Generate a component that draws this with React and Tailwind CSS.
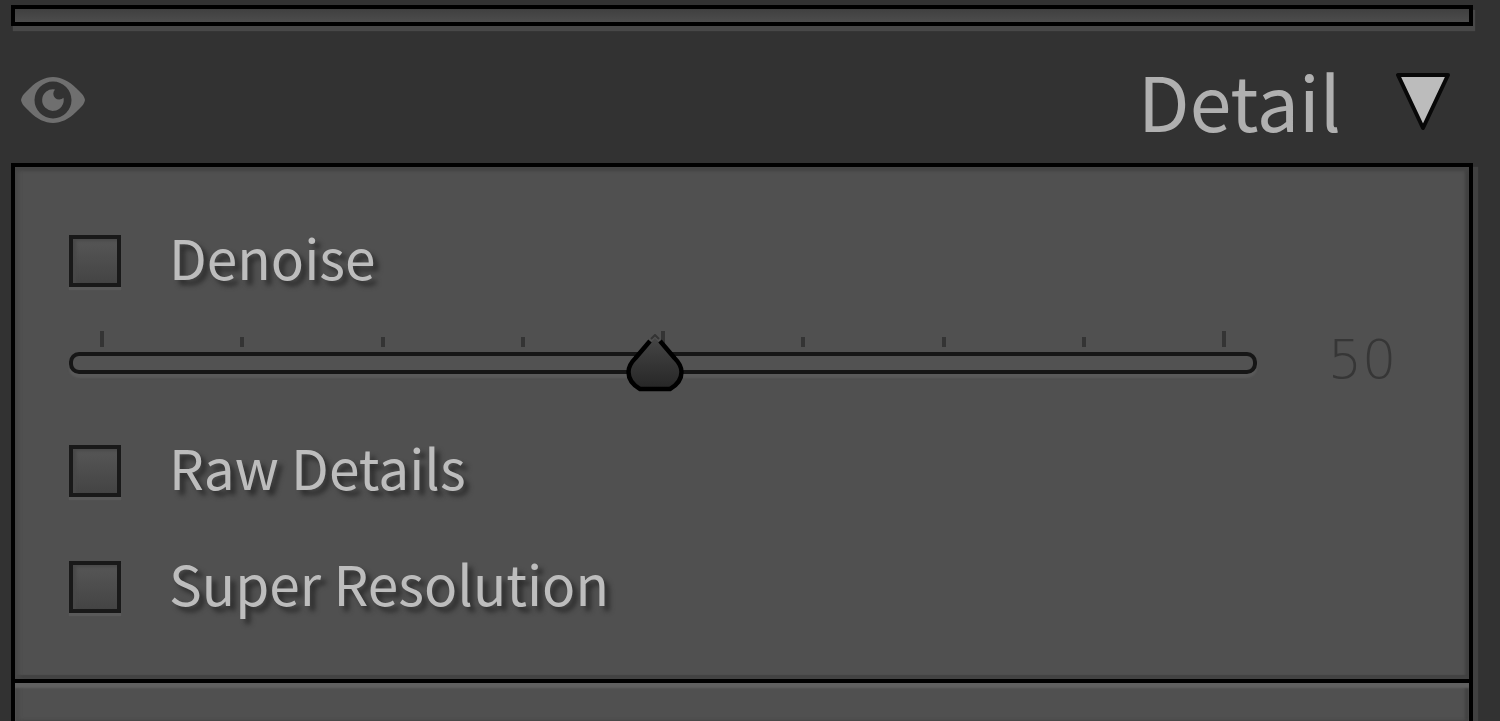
import { useState } from "react";

const FONT = "font-['Noto_Sans_CJK_SC','Noto_Sans',sans-serif]";

function EyeIcon() {
  return (
    <svg width="64" height="48" viewBox="0 0 64 48" aria-hidden="true">
      <path
        fillRule="evenodd"
        fill="#6f6f6f"
        d="M0 24C1 19 4 17 9 12C16 5 24 1 32 1s16 4 23 11C60 17 63 19 64 24C63 29 60 31 55 36C48 43 40 47 32 47S16 43 9 36C4 31 1 29 0 24ZM32 5.500a18.500 18.500 0 1 0 0 37a18.500 18.500 0 1 0 0-37Z"
      />
      <path fill="#6f6f6f" d="M34 13.500a5.200 5.200 0 0 0 8.500 8.300A10.800 10.800 0 1 1 34 13.500Z" />
    </svg>
  );
}

function CheckRow({ id, label }) {
  return (
    <div className="flex h-[52px] items-center gap-12">
      <input
        id={id}
        type="checkbox"
        className="size-[52px] shrink-0 appearance-none border-4 border-[#191919] bg-linear-to-b from-[#565656] to-[#444444] shadow-[0_3px_1px_#5a5a5a,inset_3px_2px_3px_#494949] checked:from-[#9a9a9a] checked:to-[#7c7c7c]"
      />
      <label
        htmlFor={id}
        className="pb-2.5 text-[55px] leading-[42px] whitespace-nowrap text-[#bdbdbd] [text-shadow:5px_5px_5px_#2b2b2b]"
      >
        {label}
      </label>
    </div>
  );
}

function AmountSlider() {
  const [value, setValue] = useState(50);
  return (
    <div className="mt-11 flex items-end gap-[70px] pr-[18px]">
      <div className="relative flex-1">
        <div className="mx-[31px] mb-[5px] flex h-4 items-end justify-between">
          {[0, 1, 2, 3, 4, 5, 6, 7, 8].map((tick) => (
            <span
              key={tick}
              className={tick % 4 === 0 ? "h-4 w-1 bg-[#343434]" : "h-2.5 w-1 bg-[#343434]"}
            />
          ))}
        </div>
        <input
          id="amount"
          type="range"
          aria-label="Denoise amount"
          min="0"
          max="100"
          value={value}
          onChange={(e) => setValue(Number(e.target.value))}
          className="block h-[22px] w-full appearance-none rounded-[10px] border-4 border-[#161616] bg-[#525252] shadow-[0_4px_2px_#5a5a5a] [&::-webkit-slider-thumb]:opacity-0"
        />
        <svg
          width="58"
          height="58"
          viewBox="0 0 58 58"
          aria-hidden="true"
          className="pointer-events-none absolute top-[3px] -translate-x-1/2"
          style={{ left: `calc(25px + (100% - 66px) * ${value / 100})` }}
        >
          <defs>
            <linearGradient id="thumb" x1="0" y1="0" x2="0" y2="1">
              <stop offset="0" stopColor="#454545" />
              <stop offset="1" stopColor="#262626" />
            </linearGradient>
          </defs>
          <path
            d="M29 4L9.500 24C5 28.500 2.500 33 2.500 38C2.500 45 7 51 14 55H44C51 51 55.500 45 55.500 38C55.500 33 53 28.500 48.500 24Z"
            fill="url(#thumb)"
          />
          <path
            d="M24 7L9.500 24C5 28.500 2.500 33 2.500 38C2.500 45 7 51 14 55H44C51 51 55.500 45 55.500 38C55.500 33 53 28.500 48.500 24L34 7"
            fill="none"
            stroke="#000"
            strokeWidth="4.500"
            strokeLinejoin="round"
          />
          <path d="M25 5L29 1L33 5" fill="none" stroke="#333" strokeWidth="2" />
        </svg>
      </div>
      <output
        htmlFor="amount"
        className="w-[70px] text-center font-['DejaVu_Sans',sans-serif] text-[54px] leading-7 font-extralight text-[#363636]"
      >
        {value}
      </output>
    </div>
  );
}

export default function App() {
  const [open, setOpen] = useState(true);
  return (
    <main className={`flex min-h-screen flex-col bg-[#323232] pt-[5px] pr-[27px] pl-[11px] ${FONT}`}>
      <div className="h-[21px] shrink-0 border-4 border-black bg-linear-to-b from-[#404040] to-[#4c4c4c] shadow-[2px_5px_1px_#484848]" />

      <header className="flex h-[137px] shrink-0 items-center justify-between pt-2.5 pr-[22px] pl-[10px]">
        <button type="button" aria-label="Toggle detail preview">
          <EyeIcon />
        </button>
        <button
          type="button"
          aria-expanded={open}
          onClick={() => setOpen(!open)}
          className="flex items-center gap-[54px]"
        >
          <h2 className="text-[75px] leading-[80px] font-normal text-[#b0b0b0]">Detail</h2>
          <svg width="56" height="60" viewBox="0 0 56 60" aria-hidden="true">
            <path
              d="M3 5H53L28 58Z"
              fill="#bcbcbc"
              stroke="#080808"
              strokeWidth="4"
              strokeLinejoin="round"
            />
          </svg>
        </button>
      </header>

      <section className="flex flex-1 flex-col border-4 border-b-0 border-black bg-[#505050] shadow-[5px_4px_1px_#414141]">
        {open && (
          <div className="border-b-4 border-black px-[54px] pt-[68px] pb-[66px] shadow-[inset_0_4px_3px_#454545,inset_4px_0_4px_#484848,inset_-4px_0_3px_#424242,inset_0_-4px_1px_#434343]">
            <CheckRow id="denoise" label="Denoise" />
            <AmountSlider />
            <div className="mt-[71px] flex flex-col gap-16">
              <CheckRow id="raw-details" label="Raw Details" />
              <CheckRow id="super-resolution" label="Super Resolution" />
            </div>
          </div>
        )}
        <div className="flex-1 shadow-[inset_0_5px_2px_#606060,inset_4px_0_4px_#484848,inset_-4px_0_3px_#424242]" />
      </section>
    </main>
  );
}
